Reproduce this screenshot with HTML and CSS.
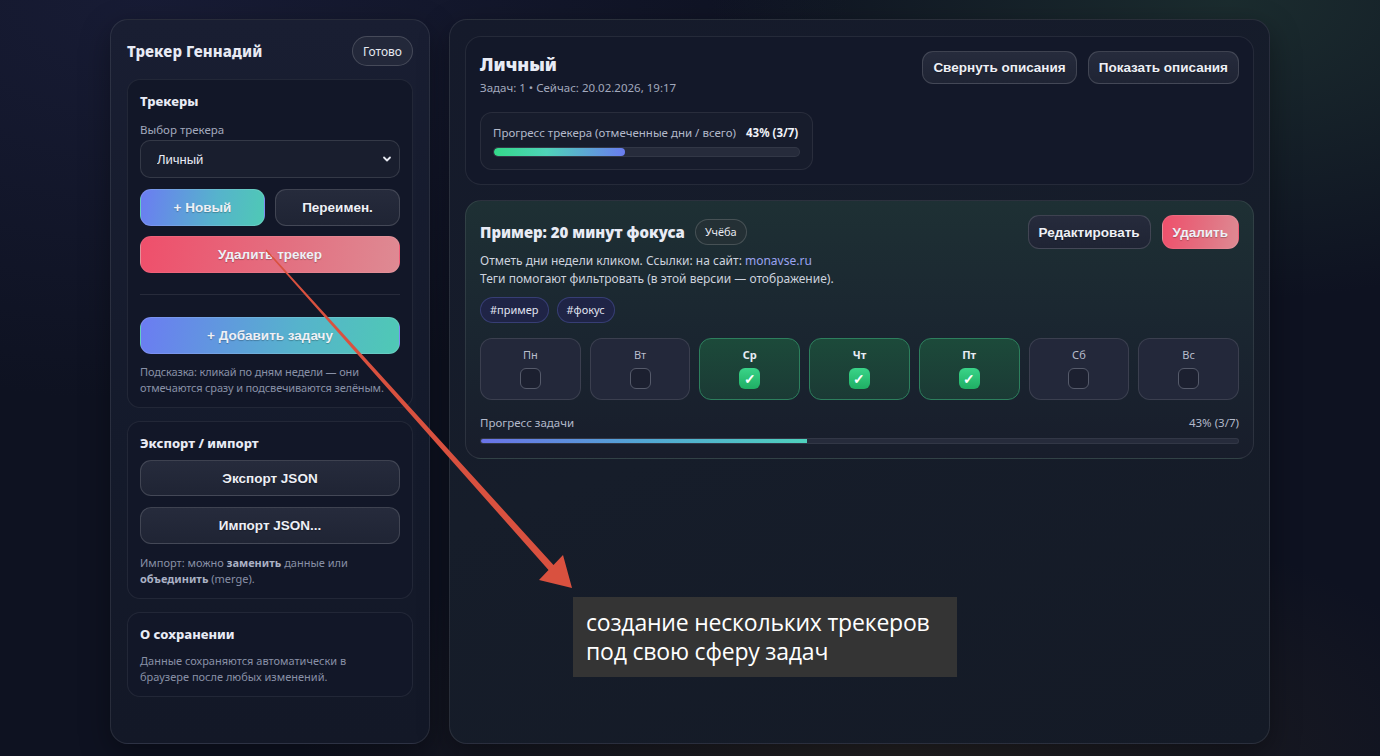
FILE: index.html
```html
<!DOCTYPE html>
<html lang="ru">
<head>
<meta charset="UTF-8">
<meta name="viewport" content="width=device-width, initial-scale=1.0">
<title>Трекер Геннадий</title>
<link rel="stylesheet" href="styles.css">
</head>
<body>

<div class="app">
    <aside class="sidebar">
        <div class="side-head">
            <h1>Трекер Геннадий</h1>
            <button class="btn-ghost">Готово</button>
        </div>

        <section class="card">
            <h3>Трекеры</h3>
            <label class="field-label" for="trackerSelect">Выбор трекера</label>
            <div class="select-wrap">
                <select id="trackerSelect">
                    <option>Личный</option>
                </select>
                <svg class="chev" width="10" height="10" viewBox="0 0 10 10"><path d="M2 3.5 L5 6.5 L8 3.5" fill="none" stroke="#e6e8f0" stroke-width="1.8" stroke-linecap="round" stroke-linejoin="round"/></svg>
            </div>
            <div class="btn-row">
                <button class="btn btn-primary">+ Новый</button>
                <button class="btn btn-secondary">Переимен.</button>
            </div>
            <button class="btn btn-danger btn-wide">Удалить трекер</button>
            <hr class="divider">
            <button class="btn btn-primary btn-wide btn-add">+ Добавить задачу</button>
            <p class="hint hint-tip">Подсказка: кликай по дням недели — они отмечаются сразу и подсвечиваются зелёным.</p>
        </section>

        <section class="card">
            <h3>Экспорт / импорт</h3>
            <button class="btn btn-secondary btn-wide btn-export">Экспорт JSON</button>
            <button class="btn btn-secondary btn-wide btn-import">Импорт JSON...</button>
            <p class="hint hint-import">Импорт: можно <b>заменить</b> данные или <b>объединить</b> (merge).</p>
        </section>

        <section class="card">
            <h3>О сохранении</h3>
            <p class="hint hint-save">Данные сохраняются автоматически в браузере после любых изменений.</p>
        </section>
    </aside>

    <main class="panel">
        <section class="tracker-head">
            <div class="head-row">
                <div>
                    <h2>Личный</h2>
                    <div class="meta">Задач: 1 • Сейчас: 20.02.2026, 19:17</div>
                </div>
                <div class="head-actions">
                    <button class="btn btn-secondary btn-sm">Свернуть описания</button>
                    <button class="btn btn-secondary btn-sm">Показать описания</button>
                </div>
            </div>
            <div class="progress-box">
                <div class="progress-line">
                    <span>Прогресс трекера (отмеченные дни / всего)</span>
                    <b>43% (3/7)</b>
                </div>
                <div class="bar bar-tracker"><div class="fill" style="width: 43%"></div></div>
            </div>
        </section>

        <section class="task">
            <div class="task-top">
                <div class="task-title">
                    <h3>Пример: 20 минут фокуса</h3>
                    <span class="pill">Учёба</span>
                </div>
                <div class="task-actions">
                    <button class="btn btn-secondary btn-md">Редактировать</button>
                    <button class="btn btn-danger btn-md">Удалить</button>
                </div>
            </div>
            <p class="desc">Отметь дни недели кликом. Ссылки: на сайт: <a href="#">monavse.ru</a><br>Теги помогают фильтровать (в этой версии — отображение).</p>
            <div class="tags">
                <span class="tag">#пример</span>
                <span class="tag">#фокус</span>
            </div>
            <div class="days">
                <div class="day"><span>Пн</span><i class="box"></i></div>
                <div class="day"><span>Вт</span><i class="box"></i></div>
                <div class="day done"><span>Ср</span><i class="box">✓</i></div>
                <div class="day done"><span>Чт</span><i class="box">✓</i></div>
                <div class="day done"><span>Пт</span><i class="box">✓</i></div>
                <div class="day"><span>Сб</span><i class="box"></i></div>
                <div class="day"><span>Вс</span><i class="box"></i></div>
            </div>
            <div class="task-progress">
                <span>Прогресс задачи</span>
                <span>43% (3/7)</span>
            </div>
            <div class="bar bar-task"><div class="fill" style="width: 43%"></div></div>
        </section>
    </main>
</div>

<!-- annotation overlay -->
<svg class="arrow" width="1380" height="756" viewBox="0 0 1380 756">
    <polygon points="265.5,250.5 266.5,249.5 553.5,565 563,555 572,588 539,580 548.5,570" fill="#d9513f"/>
</svg>
<div class="note">создание нескольких трекеров<br>под свою сферу задач</div>

</body>
</html>
```

FILE: styles.css
```css
* {
    box-sizing: border-box;
}
body {
    margin: 0;
    min-height: 756px;
    font-family: "Noto Sans", "Open Sans", sans-serif;
    color: #e8ebf5;
    background-color: #0e1221;
    background-image:
        radial-gradient(ellipse 520px 300px at 1230px 0px, rgba(40, 70, 60, 0.5), transparent),
        radial-gradient(ellipse 600px 260px at 900px 760px, rgba(60, 50, 35, 0.45), transparent),
        radial-gradient(ellipse 700px 400px at 150px 0px, rgba(30, 34, 66, 0.6), transparent);
    overflow: hidden;
}
.app {
    display: grid;
    grid-template-columns: 320px 1fr;
    gap: 19px;
    width: 1160px;
    margin: 19px auto 0;
    height: 725px;
}
button, select {
    font-family: "Liberation Sans", Arial, sans-serif;
}

/* sidebar */
.sidebar {
    background: linear-gradient(180deg, #191e32 0%, #141a2b 60%, #131827 100%);
    border: 1px solid rgba(255, 255, 255, 0.09);
    border-radius: 18px;
    padding: 16px 16px;
    box-shadow: 0 10px 30px rgba(0, 0, 0, 0.35);
}
.side-head {
    display: flex;
    align-items: center;
    justify-content: space-between;
    height: 30px;
    margin-bottom: 13px;
}
.side-head h1 {
    margin: 0;
    font-size: 15px;
    font-weight: 800;
    letter-spacing: 0.1px;
}
.btn-ghost {
    height: 30px;
    padding: 0 10px;
    border-radius: 15px;
    border: 1px solid rgba(255, 255, 255, 0.16);
    background: #23283a;
    color: #e6e8f0;
    font-family: "Noto Sans", sans-serif;
    font-size: 12px;
}
.card {
    background: #121728;
    border: 1px solid rgba(255, 255, 255, 0.07);
    border-radius: 13px;
    padding: 11px 12px 11px 12px;
    margin-bottom: 13px;
}
.card h3 {
    margin: 0;
    font-size: 13px;
    font-weight: 800;
    line-height: 20px;
}
.field-label {
    display: block;
    margin-top: 10px;
    margin-bottom: 1px;
    font-size: 11.5px;
    color: #a2a9bd;
    line-height: 18px;
}
.select-wrap {
    position: relative;
}
.select-wrap select {
    width: 100%;
    height: 38px;
    appearance: none;
    -webkit-appearance: none;
    background: #191e2e;
    border: 1px solid rgba(255, 255, 255, 0.12);
    border-radius: 10px;
    color: #e8ebf5;
    font-size: 13px;
    padding: 0 16px;
}
.select-wrap .chev {
    position: absolute;
    right: 8px;
    top: 14px;
}
.btn {
    height: 37px;
    border-radius: 11px;
    font-size: 13.5px;
    font-weight: 700;
    color: #eef0f6;
    cursor: pointer;
    text-shadow: 0 1px 1px rgba(0, 0, 0, 0.25);
}
.btn-wide {
    display: block;
    width: 100%;
}
.btn-primary {
    border: 1px solid rgba(255, 255, 255, 0.12);
    background: linear-gradient(100deg, #6b7cf2 0%, #56b3cc 60%, #4fc9b5 100%);
}
.btn-secondary {
    border: 1px solid rgba(255, 255, 255, 0.14);
    background: linear-gradient(180deg, #262b3c, #1f2434);
}
.btn-danger {
    border: 1px solid rgba(255, 255, 255, 0.08);
    background: linear-gradient(100deg, #ef4f6b 0%, #e36f80 55%, #de8a93 100%);
}
.btn-row {
    display: grid;
    grid-template-columns: 1fr 1fr;
    gap: 10px;
    margin-top: 11px;
    margin-bottom: 10px;
}
.divider {
    border: 0;
    border-top: 1px solid rgba(255, 255, 255, 0.09);
    margin: 21px 0 22px;
}
.hint {
    margin: 10px 0 0;
    font-size: 11px;
    line-height: 16px;
    color: #8890a6;
}
.hint-tip {
    letter-spacing: -0.15px;
    margin-right: -14px;
}
.hint b {
    color: #aab1c4;
}
.btn-export {
    margin-top: 7px;
    height: 36px;
}
.btn-import {
    margin-top: 11px;
}
.hint-import {
    margin-top: 11px;
}
.hint-save {
    margin-top: 9px;
    max-width: 215px;
}

/* main panel */
.panel {
    background: linear-gradient(160deg, #151a2b 0%, #161d2a 50%, #141a26 100%);
    border: 1px solid rgba(255, 255, 255, 0.09);
    border-radius: 18px;
    padding: 16px 15px;
    box-shadow: 0 10px 30px rgba(0, 0, 0, 0.35);
}
.tracker-head {
    background: #131829;
    border: 1px solid rgba(255, 255, 255, 0.08);
    border-radius: 16px;
    padding: 14px 14px 14px;
}
.head-row {
    display: flex;
    justify-content: space-between;
    align-items: flex-start;
}
.head-row h2 {
    margin: 0;
    font-size: 18px;
    font-weight: 900;
    line-height: 26px;
}
.meta {
    margin-top: 2px;
    font-size: 11.5px;
    color: #a2a9bd;
    line-height: 18px;
}
.head-actions {
    display: flex;
    gap: 11px;
    margin-top: 0;
}
.btn-sm {
    height: 33px;
    padding: 0 10px;
    border-radius: 11px;
}
.progress-box {
    width: 333px;
    margin-top: 15px;
    background: #171c2c;
    border: 1px solid rgba(255, 255, 255, 0.08);
    border-radius: 12px;
    padding: 11px 12px 12px;
}
.progress-line {
    display: flex;
    gap: 10px;
    font-size: 11.5px;
    line-height: 18px;
    color: #b3b9ca;
}
.progress-line b {
    color: #f0f2f8;
    font-weight: 700;
}
.bar {
    background: #262b3b;
    border: 1px solid rgba(255, 255, 255, 0.06);
    border-radius: 6px;
    overflow: hidden;
}
.bar-tracker {
    height: 10px;
    margin-top: 5px;
}
.bar-tracker .fill {
    height: 100%;
    border-radius: 6px;
    background: linear-gradient(90deg, #34d98a 0%, #4fd3b8 40%, #6a7cf0 100%);
}

/* task card */
.task {
    margin-top: 15px;
    background: linear-gradient(180deg, #1e3034 0%, #1a2530 55%, #181d2b 100%);
    border: 1px solid rgba(255, 255, 255, 0.09);
    border-radius: 16px;
    padding: 14px 14px 14px;
}
.task-top {
    display: flex;
    justify-content: space-between;
    align-items: center;
}
.task-title {
    display: flex;
    align-items: center;
    gap: 10px;
}
.task-title h3 {
    margin: 0;
    font-size: 15px;
    font-weight: 900;
}
.pill {
    display: inline-block;
    height: 26px;
    line-height: 24px;
    padding: 0 9px;
    border: 1px solid rgba(255, 255, 255, 0.16);
    border-radius: 13px;
    background: #243035;
    font-size: 11px;
    color: #e6e8f0;
}
.task-actions {
    display: flex;
    gap: 11px;
}
.btn-md {
    height: 34px;
    padding: 0 10px;
    border-radius: 11px;
}
.desc {
    margin: 3px 0 0;
    font-size: 12px;
    line-height: 18px;
    color: #cdd2de;
}
.desc a {
    color: #9aa3f0;
    text-decoration: none;
}
.tags {
    display: flex;
    gap: 8px;
    margin-top: 9px;
}
.tag {
    height: 26px;
    line-height: 24px;
    padding: 0 9px;
    border-radius: 13px;
    background: #1f2446;
    border: 1px solid rgba(120, 130, 240, 0.28);
    font-size: 11px;
    color: #e0e3f0;
}
.days {
    display: grid;
    grid-template-columns: repeat(7, 1fr);
    gap: 9px;
    margin-top: 15px;
}
.day {
    height: 62px;
    display: flex;
    flex-direction: column;
    align-items: center;
    padding-top: 8px;
    border-radius: 12px;
    background: #23283a;
    border: 1px solid rgba(255, 255, 255, 0.11);
}
.day span {
    font-size: 11px;
    line-height: 16px;
    color: #b8bdcc;
}
.day .box {
    margin-top: 5px;
    width: 21px;
    height: 21px;
    border-radius: 6px;
    background: #1c2030;
    border: 1px solid #555a6a;
    font-style: normal;
    font-size: 14px;
    font-weight: 700;
    line-height: 19px;
    text-align: center;
    color: #ffffff;
}
.day.done {
    background: linear-gradient(180deg, #1c4a3a 0%, #1b3a35 100%);
    border-color: #2d7f5d;
}
.day.done span {
    color: #e8ecf4;
    font-weight: 700;
}
.day.done .box {
    background: linear-gradient(180deg, #3ad489, #1fae63);
    border: 0;
    line-height: 21px;
}
.task-progress {
    display: flex;
    justify-content: space-between;
    margin-top: 14px;
    font-size: 11.5px;
    line-height: 18px;
    color: #b3b9ca;
}
.bar-task {
    height: 6px;
    margin-top: 6px;
    border-radius: 3px;
}
.bar-task .fill {
    height: 100%;
    background: linear-gradient(90deg, #6a73e8 0%, #52a7d4 50%, #4fd1bd 100%);
}

/* annotation overlay */
.arrow {
    position: absolute;
    left: 0;
    top: 0;
    pointer-events: none;
}
.note {
    position: absolute;
    left: 573px;
    top: 597px;
    width: 384px;
    height: 80px;
    padding: 11px 13px;
    background: #343434;
    color: #ffffff;
    font-family: "Open Sans", sans-serif;
    font-size: 23px;
    letter-spacing: -0.2px;
    line-height: 29px;
    white-space: nowrap;
}
```
